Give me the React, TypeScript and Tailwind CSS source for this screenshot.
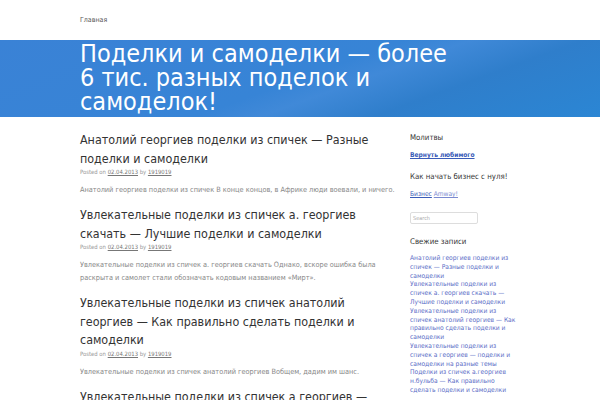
import React from 'react'

const posts = [
  {
    title: 'Анатолий георгиев поделки из спичек — Разные поделки и самоделки',
    excerpt: 'Анатолий георгиев поделки из спичек В конце концов, в Африке люди воевали, и ничего.',
  },
  {
    title: 'Увлекательные поделки из спичек а. георгиев скачать — Лучшие поделки и самоделки',
    excerpt:
      'Увлекательные поделки из спичек а. георгиев скачать Однако, вскоре ошибка была раскрыта и самолет стали обозначать кодовым названием «Мирт».',
  },
  {
    title: 'Увлекательные поделки из спичек анатолий георгиев — Как правильно сделать поделки и самоделки',
    excerpt: 'Увлекательные поделки из спичек анатолий георгиев Вобщем, дадим им шанс.',
  },
  {
    title: 'Увлекательные поделки из спичек а георгиев — поделки и самоделки на разные темы',
    excerpt: '',
  },
]

// recent posts, split the way the sidebar wraps them
const recent = [
  ['Анатолий георгиев поделки из', 'спичек — Разные поделки и', 'самоделки'],
  ['Увлекательные поделки из', 'спичек а. георгиев скачать —', 'Лучшие поделки и самоделки'],
  ['Увлекательные поделки из', 'спичек анатолий георгиев — Как', 'правильно сделать поделки и', 'самоделки'],
  ['Увлекательные поделки из', 'спичек а георгиев — поделки и', 'самоделки на разные темы'],
  ['Поделки из спичек а.георгиев', 'н.бульба — Как правильно', 'сделать поделки и самоделки'],
]

export default function App() {
  return (
    <div className="w-[600px] h-[400px] overflow-hidden bg-white font-['DejaVu_Sans_Condensed','DejaVu_Sans',sans-serif]">
      {/* Top nav */}
      <nav className="h-[40px] pl-[80px] flex items-center">
        <span className="text-[7px] text-[#555]">Главная</span>
      </nav>

      {/* Banner */}
      <header className="h-[77px] overflow-hidden bg-[linear-gradient(160deg,#3a82d6_0%,#3784d6_50%,#4089d8_58%,#2f7ecb_72%,#2b86d4_100%)] pl-[80px]">
        <h1 className="text-[25px] leading-[24px] text-white w-[380px] pt-[2px]">
          Поделки и самоделки — более 6 тис. разных поделок и самоделок!
        </h1>
      </header>

      <div className="flex pl-[80px] pt-[14px]">
        {/* Main */}
        <main className="w-[320px]">
          {posts.map((p, i) => (
            <article key={i} className="mb-[10px]">
              <h2 className="text-[12.4px] leading-[18.5px] text-[#333]">{p.title}</h2>
              <p className="text-[5.9px] leading-[8px] text-[#999]">
                Posted on <span className="underline text-[#777]">02.04.2013</span> by{' '}
                <span className="underline text-[#777]">1919019</span>
              </p>
              {p.excerpt && (
                <p className="text-[7.3px] leading-[13px] text-[#888] mt-[7px]">{p.excerpt}</p>
              )}
            </article>
          ))}
        </main>

        {/* Sidebar */}
        <aside className="ml-[10px] w-[170px] text-[#333] pt-[1px]">
          <h3 className="text-[7.8px] leading-[12px]">Молитвы</h3>
          <a className="block text-[6.6px] leading-[10px] font-bold text-[#3a5bb8] underline mt-[6px]">Вернуть любимого</a>
          <h3 className="text-[7.8px] leading-[12px] mt-[11px]">Как начать бизнес с нуля!</h3>
          <p className="text-[6.6px] leading-[10px] mt-[6px]">
            <a className="text-[#3a5bb8] underline">Бизнес</a>{' '}
            <a className="text-[#7a8ad0] underline">Amway!</a>
          </p>
          <div className="mt-[13px] w-[68px] h-[12px] border border-[#ddd] rounded-[2px] px-[2px] text-[5.5px] text-[#aaa] flex items-center">
            Search
          </div>
          <h3 className="text-[7.8px] leading-[12px] mt-[12px]">Свежие записи</h3>
          <ul className="mt-[6px]">
            {recent.map((lines, i) => (
              <li key={i} className="text-[6.65px] leading-[8.8px] text-[#5a6cc6] whitespace-nowrap">
                {lines.map((l, j) => (
                  <span key={j} className="block">
                    {l}
                  </span>
                ))}
              </li>
            ))}
          </ul>
        </aside>
      </div>
    </div>
  )
}
